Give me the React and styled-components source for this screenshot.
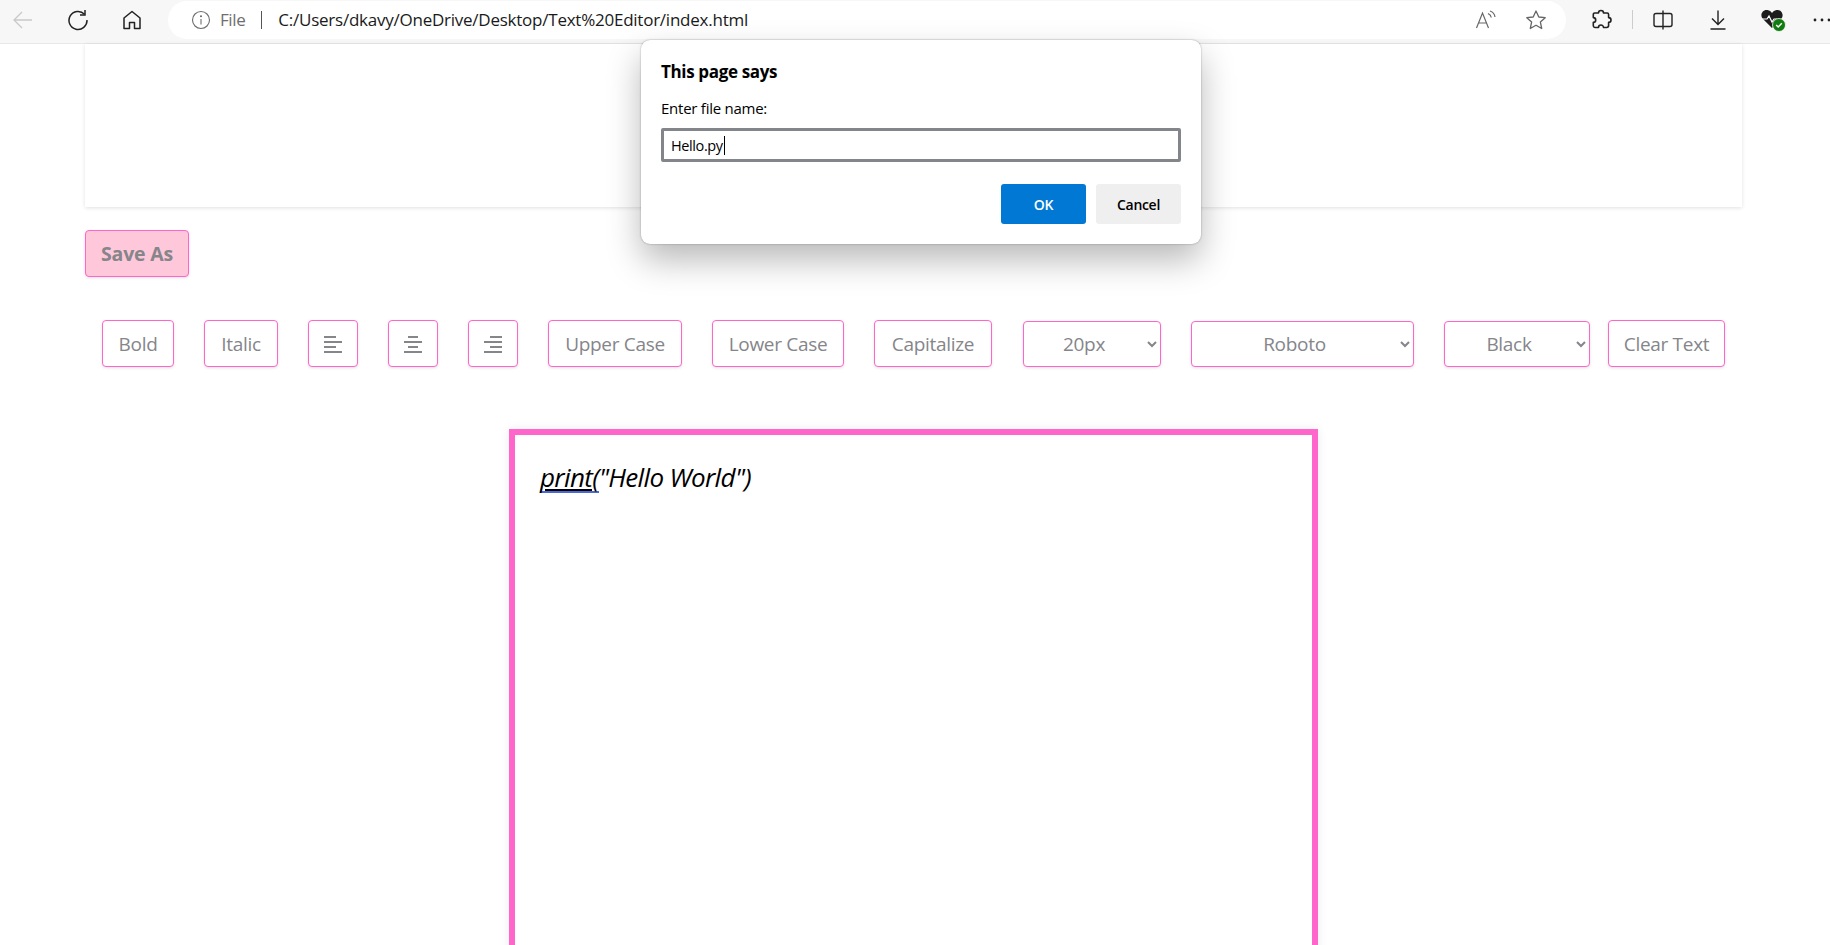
import React from 'react';
import styled, { createGlobalStyle } from 'styled-components';

const GlobalStyle = createGlobalStyle`
  html, body {
    margin: 0;
    padding: 0;
    background: #fff;
    overflow: hidden;
  }
  body {
    font-family: "Open Sans", "Noto Sans", sans-serif;
  }
`;

const Screen = styled.div`
  position: relative;
  width: 1830px;
  height: 945px;
  overflow: hidden;
`;

const BrowserBar = styled.div`
  display: flex;
  align-items: center;
  height: 44px;
  padding: 0 0 4px 10px;
  background: #f7f7f7;
  border-bottom: 1px solid #e8e8e8;
  box-sizing: border-box;
`;

const NavIcon = styled.div`
  display: flex;
  align-items: center;
  justify-content: center;
  width: ${(p) => p.$w || 36}px;
  margin-right: ${(p) => p.$mr || 0}px;
  color: ${(p) => p.$color || '#222'};
  flex-shrink: 0;
`;

const AddressPill = styled.div`
  display: flex;
  align-items: center;
  width: 1398px;
  height: 38px;
  margin-left: 23px;
  padding: 0 19px 0 23px;
  background: #fff;
  border-radius: 19px;
  box-sizing: border-box;
  flex-shrink: 0;
`;

const FileLabel = styled.span`
  margin-left: 9px;
  font-size: 17px;
  letter-spacing: -0.4px;
  color: #6e6e6e;
`;

const Divider = styled.span`
  width: 1px;
  height: 18px;
  margin: 0 16px 0 16px;
  background: #555;
`;

const Url = styled.span`
  flex: 1;
  font-size: 17px;
  letter-spacing: -0.24px;
  color: #1a1a1a;
`;

const PillIcons = styled.div`
  display: flex;
  align-items: center;
  gap: 28px;
  color: #666;
`;

const ToolIcons = styled.div`
  display: flex;
  align-items: center;
  margin-left: 22px;
`;

const ToolSep = styled.span`
  width: 1px;
  height: 19px;
  margin: 0 17px 0 18px;
  background: #ccc;
`;

const Page = styled.main`
  padding: 0 88px 0 85px;
`;

const TopCard = styled.div`
  height: 163px;
  background: #fff;
  box-shadow: 0 1px 4px rgba(0, 0, 0, 0.12);
`;

const SaveAs = styled.button`
  display: block;
  width: 104px;
  height: 47px;
  margin-top: 23px;
  padding: 0;
  background: #ffc8da;
  border: 1px solid #ff66cc;
  border-radius: 4px;
  box-shadow: 0 1px 3px rgba(0, 0, 0, 0.12);
  font: 700 19.5px "Open Sans", sans-serif;
  letter-spacing: -0.2px;
  color: #85858a;
`;

const Toolbar = styled.div`
  display: flex;
  align-items: flex-start;
  gap: 30px;
  margin-top: 43px;
  padding-left: 17px;
`;

const ToolButton = styled.button`
  display: flex;
  align-items: center;
  justify-content: center;
  width: ${(p) => p.$w}px;
  height: 47px;
  margin-left: ${(p) => p.$ml || 0}px;
  padding: 0;
  background: #fff;
  border: 1px solid #ff66cc;
  border-radius: 4px;
  box-shadow: 0 1px 3px rgba(0, 0, 0, 0.12);
  font: 400 19px "Open Sans", sans-serif;
  letter-spacing: -0.3px;
  color: #85858a;
  flex-shrink: 0;
`;

const ToolSelect = styled.select`
  width: ${(p) => p.$w}px;
  height: 46px;
  margin-top: 1px;
  margin-left: ${(p) => p.$ml || 0}px;
  padding: 0 6px 0 2px;
  background-color: #fff;
  border: 1px solid #ff66cc;
  border-radius: 4px;
  box-shadow: 0 1px 3px rgba(0, 0, 0, 0.12);
  font: 400 19px "Open Sans", sans-serif;
  letter-spacing: -0.3px;
  color: #85858a;
  text-align: center;
  flex-shrink: 0;
`;

const Editor = styled.div`
  width: 809px;
  height: 600px;
  margin: 62px 0 0 424px;
  padding: 24px 25px;
  box-sizing: border-box;
  background: #fff;
  border: 6px solid #ff66cc;
  box-shadow: 0 0 10px rgba(0, 0, 0, 0.08);
  font: italic 400 26px/36px "Open Sans", sans-serif;
  letter-spacing: -0.65px;
  color: #000;
`;

const SpellWord = styled.span`
  display: inline-block;
  line-height: 27px;
  text-decoration: underline;
  text-decoration-color: #000;
  border-bottom: 2px double #4a68d8;
`;

const Dialog = styled.div`
  position: absolute;
  left: 641px;
  top: 40px;
  display: flex;
  flex-direction: column;
  width: 560px;
  height: 204px;
  padding: 21px 20px 20px;
  box-sizing: border-box;
  background: #fff;
  border-radius: 9px;
  box-shadow: 0 0 2px rgba(0, 0, 0, 0.35), 0 16px 34px rgba(0, 0, 0, 0.28);
`;

const DialogTitle = styled.div`
  font-size: 17px;
  font-weight: 700;
  letter-spacing: -0.35px;
  line-height: 22px;
  color: #000;
`;

const DialogLabel = styled.label`
  margin-top: 15px;
  font-size: 15px;
  letter-spacing: -0.25px;
  line-height: 20px;
  color: #000;
`;

const DialogInput = styled.div`
  display: flex;
  align-items: center;
  height: 34px;
  margin-top: 10px;
  padding: 0 7px;
  box-sizing: border-box;
  border: 3px solid #82858a;
  border-radius: 2px;
  font-size: 14.5px;
  letter-spacing: -0.4px;
  color: #000;
`;

const Caret = styled.span`
  width: 1px;
  height: 19px;
  margin-left: 1px;
  background: #000;
`;

const DialogActions = styled.div`
  display: flex;
  justify-content: flex-end;
  gap: 10px;
  margin-top: 22px;
`;

const DialogButton = styled.button`
  width: 85px;
  height: 40px;
  padding: 0;
  border: 0;
  border-radius: 3px;
  background: ${(p) => (p.$primary ? '#0078d4' : '#efefef')};
  color: ${(p) => (p.$primary ? '#fff' : '#000')};
  font: 600 14px "Open Sans", sans-serif;
  letter-spacing: -0.3px;
`;

const BackIcon = () => (
  <svg width="22" height="22" viewBox="0 0 22 22" fill="none" stroke="currentColor" strokeWidth="1.3">
    <path d="M20 11H2M10 3l-8 8 8 8" />
  </svg>
);

const ReloadIcon = () => (
  <svg width="22" height="22" viewBox="0 0 22 22" fill="none" stroke="currentColor" strokeWidth="1.5">
    <path d="M17.500 5.200A9 9 0 1 0 20 11" />
    <path d="M18 1v5h-5" />
  </svg>
);

const HomeIcon = () => (
  <svg width="22" height="22" viewBox="0 0 22 22" fill="none" stroke="currentColor" strokeWidth="1.5" strokeLinejoin="round">
    <path d="M11 2.500 3 9v10.500h5.500V13.500h5v6H19V9z" />
  </svg>
);

const InfoIcon = () => (
  <svg width="20" height="20" viewBox="0 0 20 20" fill="none" stroke="#6e6e6e" strokeWidth="1.1">
    <circle cx="10" cy="10" r="8.500" />
    <path d="M10 9v5.500" />
    <circle cx="10" cy="6.200" r="0.500" fill="#6e6e6e" />
  </svg>
);

const ReadAloudIcon = () => (
  <svg width="22" height="20" viewBox="0 0 22 20" fill="none" stroke="currentColor" strokeWidth="1.2">
    <path d="M1.500 18 7.500 3l6 15M3.600 13h7.800" />
    <path d="M13 3.500c2 .8 3 2 3.300 4M15 1c3 1 4.600 3 5 6" />
  </svg>
);

const StarIcon = () => (
  <svg width="22" height="22" viewBox="0 0 22 22" fill="none" stroke="currentColor" strokeWidth="1.3" strokeLinejoin="round">
    <path d="m11 2 2.800 6 6.400.7-4.800 4.400 1.300 6.400L11 16.300l-5.700 3.200 1.300-6.400-4.800-4.400L8.200 8z" />
  </svg>
);

const PuzzleIcon = () => (
  <svg width="22" height="22" viewBox="0 0 22 22" fill="none" stroke="#222" strokeWidth="1.6" strokeLinejoin="round">
    <path d="M8.500 4a2.500 2.500 0 0 1 5 0h3.700a1.400 1.400 0 0 1 1.400 1.400v3.200a2.400 2.400 0 0 1 0 4.800v3.200a1.900 1.900 0 0 1-1.900 1.900h-3.200a2.500 2.500 0 0 0-5 0H5.200a1.900 1.900 0 0 1-1.900-1.900v-3.200a2.400 2.400 0 0 0 0-4.800V5.400A1.400 1.400 0 0 1 4.700 4z" />
  </svg>
);

const SplitIcon = () => (
  <svg width="22" height="22" viewBox="0 0 22 22" fill="none" stroke="#222" strokeWidth="1.4">
    <path d="M11 1.500v19" />
    <path d="M11 4.500H4a2 2 0 0 0-2 2v9a2 2 0 0 0 2 2h7M11 4.500h7a2 2 0 0 1 2 2v9a2 2 0 0 1-2 2h-7" />
  </svg>
);

const DownloadIcon = () => (
  <svg width="22" height="22" viewBox="0 0 22 22" fill="none" stroke="#222" strokeWidth="1.4">
    <path d="M11 1.500v14M5 9.500l6 6 6-6M3.500 20h15" />
  </svg>
);

const HealthIcon = () => (
  <svg width="26" height="24" viewBox="0 0 26 24">
    <path d="M12 20 2.500 10.500C-.5 6.500 3 1 7.500 2c2 .4 3.500 1.500 4.500 3 1-1.500 2.500-2.600 4.500-3 4.500-1 8 4.500 5 8.500z" fill="#1c1c1c" />
    <path d="M1 11h6l2-3 3 6 2-3h3" fill="none" stroke="#fff" strokeWidth="1.2" />
    <circle cx="19" cy="17" r="6.500" fill="#107c10" stroke="#f7f7f7" strokeWidth="0.8" />
    <path d="m16.200 17 2 2 3.600-3.800" fill="none" stroke="#fff" strokeWidth="1.4" />
  </svg>
);

const MoreIcon = () => (
  <svg width="18" height="4" viewBox="0 0 18 4" fill="#222">
    <circle cx="2" cy="2" r="1.400" />
    <circle cx="9" cy="2" r="1.400" />
    <circle cx="16" cy="2" r="1.400" />
  </svg>
);

// four bars, each line is [x, width]
const alignBars = {
  left: [[0, 12], [0, 18], [0, 12], [0, 18]],
  center: [[4, 10], [0, 18], [4, 10], [0, 18]],
  right: [[6, 12], [0, 18], [6, 12], [0, 18]],
};

const AlignIcon = ({ type }) => (
  <svg width="18" height="18" viewBox="0 0 18 18" fill="#85858a">
    {alignBars[type].map(([x, w], i) => (
      <rect key={i} x={x} y={1 + i * 5} width={w} height="2" />
    ))}
  </svg>
);

const App = () => {
  return (
    <Screen>
      <GlobalStyle />
      <BrowserBar>
        <NavIcon $w={26} $mr={29} $color="#c9c9c9"><BackIcon /></NavIcon>
        <NavIcon $w={26} $mr={28}><ReloadIcon /></NavIcon>
        <NavIcon $w={26}><HomeIcon /></NavIcon>
        <AddressPill>
          <InfoIcon />
          <FileLabel>File</FileLabel>
          <Divider />
          <Url>C:/Users/dkavy/OneDrive/Desktop/Text%20Editor/index.html</Url>
          <PillIcons>
            <ReadAloudIcon />
            <StarIcon />
          </PillIcons>
        </AddressPill>
        <ToolIcons>
          <NavIcon $w={26}><PuzzleIcon /></NavIcon>
          <ToolSep />
          <NavIcon $w={26} $mr={29}><SplitIcon /></NavIcon>
          <NavIcon $w={26} $mr={28}><DownloadIcon /></NavIcon>
          <NavIcon $w={28} $mr={26}><HealthIcon /></NavIcon>
          <NavIcon $w={18}><MoreIcon /></NavIcon>
        </ToolIcons>
      </BrowserBar>

      <Page>
        <TopCard />
        <SaveAs>Save As</SaveAs>
        <Toolbar>
          <ToolButton $w={72}>Bold</ToolButton>
          <ToolButton $w={74}>Italic</ToolButton>
          <ToolButton $w={50}><AlignIcon type="left" /></ToolButton>
          <ToolButton $w={50}><AlignIcon type="center" /></ToolButton>
          <ToolButton $w={50}><AlignIcon type="right" /></ToolButton>
          <ToolButton $w={134}>Upper Case</ToolButton>
          <ToolButton $w={132}>Lower Case</ToolButton>
          <ToolButton $w={118}>Capitalize</ToolButton>
          <ToolSelect $w={138} $ml={1} defaultValue="20px">
            <option>20px</option>
          </ToolSelect>
          <ToolSelect $w={223} defaultValue="Roboto">
            <option>Roboto</option>
          </ToolSelect>
          <ToolSelect $w={146} defaultValue="Black">
            <option>Black</option>
          </ToolSelect>
          <ToolButton $w={117} $ml={-12}>Clear Text</ToolButton>
        </Toolbar>
        <Editor>
          <SpellWord>print(</SpellWord>"Hello World")
        </Editor>
      </Page>

      <Dialog>
        <DialogTitle>This page says</DialogTitle>
        <DialogLabel>Enter file name:</DialogLabel>
        <DialogInput>Hello.py<Caret /></DialogInput>
        <DialogActions>
          <DialogButton $primary>OK</DialogButton>
          <DialogButton>Cancel</DialogButton>
        </DialogActions>
      </Dialog>
    </Screen>
  );
};

export default App;
